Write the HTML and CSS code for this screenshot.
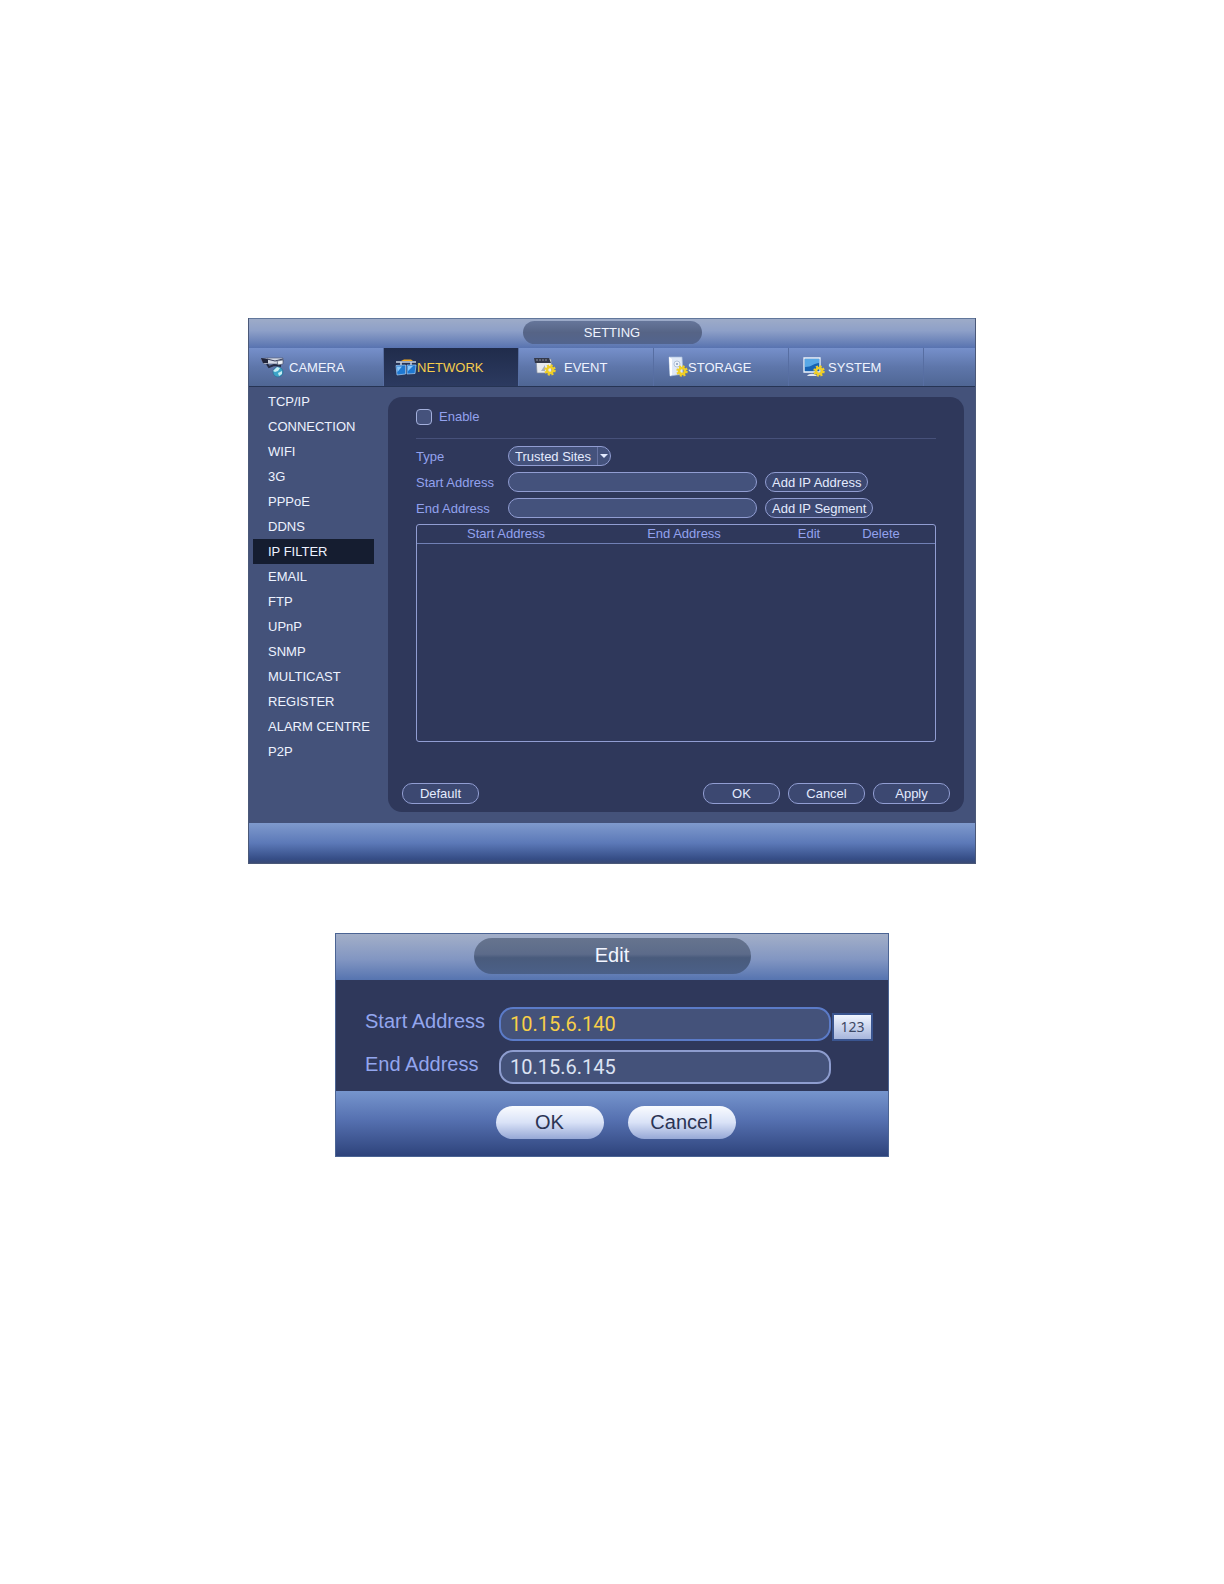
FILE: index.html
```html
<!DOCTYPE html>
<html lang="en">
<head>
    <meta charset="UTF-8">
    <meta name="viewport" content="width=device-width, initial-scale=1.0">
    <title>Setting - IP Filter</title>
    <link rel="stylesheet" href="styles.css">
</head>
<body>
    <main class="window">
        <header class="title-bar">
            <h1 class="title">SETTING</h1>
        </header>

        <nav class="tabs">
            <a class="tab" href="#camera">
                <svg class="icon" viewBox="0 0 26 24" aria-hidden="true">
                    <path d="M1 4 7 3 23 3 23 7 17 9 4 9z" fill="#d3d9e6" stroke="#59627c" stroke-width="0.7"/>
                    <path d="M1 3 8 4 8 8 3 8z" fill="#20243a"/>
                    <path d="M7 4 15 6 23 4" fill="none" stroke="#343b58" stroke-width="1"/>
                    <path d="M7 9 9 12 14 10 21 11" fill="none" stroke="#252c44" stroke-width="2"/>
                    <path d="M17 6 23 5 23 9 18 10z" fill="#eef2f7" stroke="#4a536b" stroke-width="0.7"/>
                    <circle cx="18" cy="17" r="5" fill="#3ba4c8" stroke="#2b6f94" stroke-width="0.7"/>
                    <path d="M13 16 17 12 20 13 18 16 15 17zM18 18 22 16 22 19 19 21z" fill="#c5edf3"/>
                </svg>
                CAMERA
            </a>
            <a class="tab tab-tight active" href="#network">
                <svg class="icon icon-network" viewBox="0 0 22 24" aria-hidden="true">
                    <path d="M1 7H21" stroke="#c9d3e2" stroke-width="1.5"/>
                    <path d="M6 6 9 4.500H16L18 6z" fill="#f4a91c"/>
                    <path d="M6 7V10M16 7V10" stroke="#c9d3e2" stroke-width="1.5"/>
                    <path d="M1 10.500 10.500 10 10.500 19 2 20z" fill="#1f78d1" stroke="#a9d0f7" stroke-width="0.7"/>
                    <path d="M12 10H21L20 18.500 12 19z" fill="#1f78d1" stroke="#a9d0f7" stroke-width="0.7"/>
                    <path d="M2 11.500H7L2.500 17zM13 11H18L13 16z" fill="#8cc8fa"/>
                </svg>
                NETWORK
            </a>
            <a class="tab tab-indent" href="#event">
                <svg class="icon" viewBox="0 0 26 24" aria-hidden="true">
                    <path d="M3 4H18L19 18H4z" fill="#e8ebef" stroke="#7d879b" stroke-width="0.7"/>
                    <path d="M1 3H16L18 8H2z" fill="#34394a"/>
                    <path d="M3 5H15" stroke="#8990a0" stroke-dasharray="2 1"/>
                    <path d="M8 16 12 10V16z" fill="#a7b0bf"/>
                    <circle cx="17" cy="15" r="4.5" fill="none" stroke="#f0cf26" stroke-width="2.5" stroke-dasharray="2 1.53"/>
                    <circle cx="17" cy="15" r="3" fill="none" stroke="#f0cf26" stroke-width="2.5"/>
                </svg>
                <span class="label-event">EVENT</span>
            </a>
            <a class="tab tab-tight tab-indent" href="#storage">
                <svg class="icon icon-storage" viewBox="0 0 20 24" aria-hidden="true">
                    <path d="M1 2 14 2 15 19 2 21z" fill="#dfe9f7" stroke="#a6bbda" stroke-width="0.7"/>
                    <path d="M1 2 4 4 4 20 2 21z" fill="#fff"/>
                    <circle cx="9" cy="9" r="3" fill="#edf3fa" stroke="#9db0cc" stroke-width="0.7"/>
                    <circle cx="9" cy="9" r="1" fill="#8498b8"/>
                    <circle cx="14" cy="16" r="4.5" fill="none" stroke="#f0cf26" stroke-width="2.5" stroke-dasharray="2 1.53"/>
                    <circle cx="14" cy="16" r="3" fill="none" stroke="#f0cf26" stroke-width="2.5"/>
                </svg>
                STORAGE
            </a>
            <a class="tab tab-indent" href="#system">
                <svg class="icon icon-system" viewBox="0 0 22 24" aria-hidden="true">
                    <path d="M1 3H17V17H1z" fill="#1763b4" stroke="#edf4fc" stroke-width="1.3"/>
                    <path d="M2 4H16V8C11 8 9 12 2 12z" fill="#58a8e6"/>
                    <path d="M4 21C6 18 12 18 14 21z" fill="#e2e7ef"/>
                    <circle cx="16" cy="16" r="4.5" fill="none" stroke="#f0cf26" stroke-width="2.5" stroke-dasharray="2 1.53"/>
                    <circle cx="16" cy="16" r="3" fill="none" stroke="#f0cf26" stroke-width="2.5"/>
                </svg>
                SYSTEM
            </a>
        </nav>

        <div class="content">
            <nav class="sidebar">
                <a href="#tcpip">TCP/IP</a>
                <a href="#connection">CONNECTION</a>
                <a href="#wifi">WIFI</a>
                <a href="#3g">3G</a>
                <a href="#pppoe">PPPoE</a>
                <a href="#ddns">DDNS</a>
                <a class="active" href="#ipfilter">IP FILTER</a>
                <a href="#email">EMAIL</a>
                <a href="#ftp">FTP</a>
                <a href="#upnp">UPnP</a>
                <a href="#snmp">SNMP</a>
                <a href="#multicast">MULTICAST</a>
                <a href="#register">REGISTER</a>
                <a href="#alarm">ALARM CENTRE</a>
                <a href="#p2p">P2P</a>
            </nav>

            <form class="panel">
                <div class="settings">
                    <div class="enable-row">
                        <input type="checkbox" id="enable">
                        <label for="enable">Enable</label>
                    </div>

                    <div class="form-row">
                        <label for="type">Type</label>
                        <div class="select-box">
                            <select id="type">
                                <option>Trusted Sites</option>
                                <option>Blocked Sites</option>
                            </select>
                            <svg class="arrow" viewBox="0 0 12 18" aria-hidden="true">
                                <path d="M0 0V18" stroke="#8792c6"/>
                                <path d="M3 7H11L7 11z" fill="#e4ebff"/>
                            </svg>
                        </div>
                    </div>
                    <div class="form-row">
                        <label for="start">Start Address</label>
                        <input type="text" id="start">
                        <button class="btn" type="button">Add IP Address</button>
                    </div>
                    <div class="form-row">
                        <label for="end">End Address</label>
                        <input type="text" id="end">
                        <button class="btn" type="button">Add IP Segment</button>
                    </div>

                    <div class="table-box">
                        <table>
                            <thead>
                                <tr>
                                    <th class="col-address">Start Address</th>
                                    <th class="col-address">End Address</th>
                                    <th class="col-edit">Edit</th>
                                    <th class="col-delete">Delete</th>
                                </tr>
                            </thead>
                            <tbody></tbody>
                        </table>
                    </div>
                </div>

                <div class="actions">
                    <button class="btn btn-default" type="button">Default</button>
                    <button class="btn" type="button">OK</button>
                    <button class="btn" type="button">Cancel</button>
                    <button class="btn" type="button">Apply</button>
                </div>
            </form>
        </div>

        <footer class="status-bar"></footer>
    </main>

    <section class="dialog">
        <header class="dialog-header">
            <h2 class="dialog-title">Edit</h2>
        </header>
        <div class="dialog-body">
            <div class="dialog-row">
                <label for="edit-start">Start Address</label>
                <input class="focused" type="text" id="edit-start" value="10.15.6.140">
                <button class="keypad" type="button">123</button>
            </div>
            <div class="dialog-row">
                <label for="edit-end">End Address</label>
                <input type="text" id="edit-end" value="10.15.6.145">
            </div>
        </div>
        <footer class="dialog-footer">
            <button type="button">OK</button>
            <button type="button">Cancel</button>
        </footer>
    </section>
</body>
</html>
```
FILE: styles.css
```css
* {
    box-sizing: border-box;
}
body {
    margin: 0;
    padding: 318px 20px;
    background: #fff;
    font-family: "Liberation Sans", Arial, sans-serif;
    font-size: 13px;
}
a {
    color: inherit;
    text-decoration: none;
}
button, input, select {
    font-family: inherit;
    font-size: inherit;
    margin: 0;
}

/* main window */
.window {
    max-width: 728px;
    margin: 0 auto;
    background: #44527a;
    border: 1px solid #4a5878;
    border-top: 0;
    color: #eef3ff;
}
.title-bar {
    display: flex;
    justify-content: center;
    padding: 2px 0 4px;
    background: linear-gradient(#9dabc8, #8ea0c8 40%, #5873b0);
    border-top: 1px solid #61779b;
}
.title {
    width: 179px;
    margin: 0;
    border-radius: 12px;
    background: linear-gradient(#66769a, #566486 50%, #52648e);
    font-size: 13px;
    font-weight: normal;
    line-height: 23px;
    text-align: center;
}
.tabs {
    display: flex;
    height: 39px;
    background: linear-gradient(#7690cb, #5e76aa 50%, #4f6694);
    border-bottom: 1px solid #263454;
}
.tab {
    display: flex;
    align-items: center;
    gap: 3px;
    width: 135px;
    padding-left: 11px;
    border-right: 1px solid #576ea2;
}
.tab-tight {
    gap: 0;
}
.tab-indent {
    padding-left: 14px;
}
.tab.active {
    background: linear-gradient(#202c4b, #2c3a60);
    color: #f5cc4c;
}
.icon {
    width: 26px;
    height: 24px;
}
.icon-network, .icon-system {
    width: 22px;
}
.icon-storage {
    width: 20px;
}
.label-event {
    padding-left: 2px;
}

.content {
    display: flex;
    padding: 2px 11px 11px 4px;
}
.sidebar {
    width: 121px;
    margin-right: 14px;
}
.sidebar a {
    display: block;
    padding-left: 15px;
    line-height: 25px;
    white-space: nowrap;
}
.sidebar .active {
    background: #151d30;
}
.panel {
    flex: 1;
    display: flex;
    flex-direction: column;
    margin-top: 8px;
    padding: 12px 14px 8px;
    border-radius: 14px;
    background: #2f385b;
    color: #93a2ee;
}
.settings {
    padding: 0 14px;
}
.enable-row {
    display: flex;
    align-items: center;
    gap: 7px;
    height: 30px;
    margin-bottom: 7px;
    padding-bottom: 14px;
    border-bottom: 1px solid #47517a;
}
.enable-row input {
    appearance: none;
    width: 16px;
    height: 16px;
    border: 1px solid #a3afdb;
    border-radius: 4px;
    background: #45527c;
}
.form-row {
    display: flex;
    align-items: center;
    gap: 8px;
    margin-bottom: 6px;
}
.form-row label {
    width: 84px;
}
.form-row input, .select-box select, .btn {
    height: 20px;
    border: 1px solid #919dd2;
    border-radius: 10px;
    background: #44527c;
    color: #e4ebff;
}
.form-row input {
    width: 249px;
    padding: 0 8px;
}
.select-box {
    position: relative;
}
.select-box select {
    appearance: none;
    display: block;
    width: 103px;
    padding: 0 14px 0 6px;
}
.arrow {
    position: absolute;
    top: 1px;
    right: 2px;
    width: 12px;
    height: 18px;
    pointer-events: none;
}
.btn {
    padding: 0 6px;
    background: #3c4871;
}
.table-box {
    height: 218px;
    border: 1px solid #919dd2;
    border-radius: 3px;
}
table {
    width: 100%;
    border-collapse: collapse;
    table-layout: fixed;
}
th {
    height: 18px;
    padding: 0;
    border-bottom: 1px solid #7180b5;
    font-weight: normal;
}
.col-address {
    width: 178px;
}
.col-edit {
    width: 72px;
}
.col-delete {
    padding-right: 18px;
}
.actions {
    display: flex;
    gap: 8px;
    margin-top: 41px;
}
.actions .btn {
    width: 77px;
    height: 21px;
}
.actions .btn-default {
    margin-right: auto;
}
.status-bar {
    height: 40px;
    background: linear-gradient(#7f9acd, #5c79b8 50%, #354d86 90%, #3a4a75);
}

/* edit dialog */
.dialog {
    max-width: 554px;
    margin: 69px auto 0;
    border: 1px solid #4b6494;
    background: #2f385b;
    font-size: 20px;
}
.dialog-header {
    display: flex;
    justify-content: center;
    height: 46px;
    padding-top: 4px;
    background: linear-gradient(#a3afc8, #8296c2 55%, #5674b0);
}
.dialog-title {
    width: 277px;
    height: 36px;
    margin: 0;
    border-radius: 18px;
    background: linear-gradient(#66748e, #5c6b8a 45%, #495b7c 55%, #4b6088);
    color: #f2f5ff;
    font-size: 20px;
    font-weight: normal;
    line-height: 34px;
    text-align: center;
}
.dialog-body {
    padding: 27px 14px 7px 29px;
}
.dialog-row {
    display: flex;
    align-items: center;
    height: 34px;
}
.dialog-row + .dialog-row {
    margin-top: 9px;
}
.dialog-row label {
    width: 134px;
    padding-bottom: 6px;
    color: #93a6ee;
}
.dialog-row input {
    width: 332px;
    height: 34px;
    padding: 0 9px;
    border: 2px solid #8e9dcf;
    border-radius: 14px;
    background: #44527a;
    color: #dce3f3;
    font-family: Roboto, sans-serif;
}
.dialog-row .focused {
    border-color: #5b7bc8;
    color: #f7cf48;
}
.keypad {
    width: 41px;
    height: 28px;
    margin-top: 6px;
    margin-left: 1px;
    padding: 0;
    border: 2px solid #3a5590;
    background: linear-gradient(#f0f5ff, #a7b6dc);
    color: #3c4764;
    font-family: "Noto Sans", sans-serif;
    font-size: 14px;
    line-height: 22px;
}
.dialog-footer {
    display: flex;
    justify-content: center;
    gap: 24px;
    height: 65px;
    padding: 15px 0 0 7px;
    background: linear-gradient(#7695cd, #5570b0 45%, #2e437b);
}
.dialog-footer button {
    width: 108px;
    height: 33px;
    padding: 0;
    border: 0;
    border-radius: 17px;
    background: linear-gradient(#fafcff, #d9e2f7 50%, #96a8d6);
    color: #2b3454;
}
```
